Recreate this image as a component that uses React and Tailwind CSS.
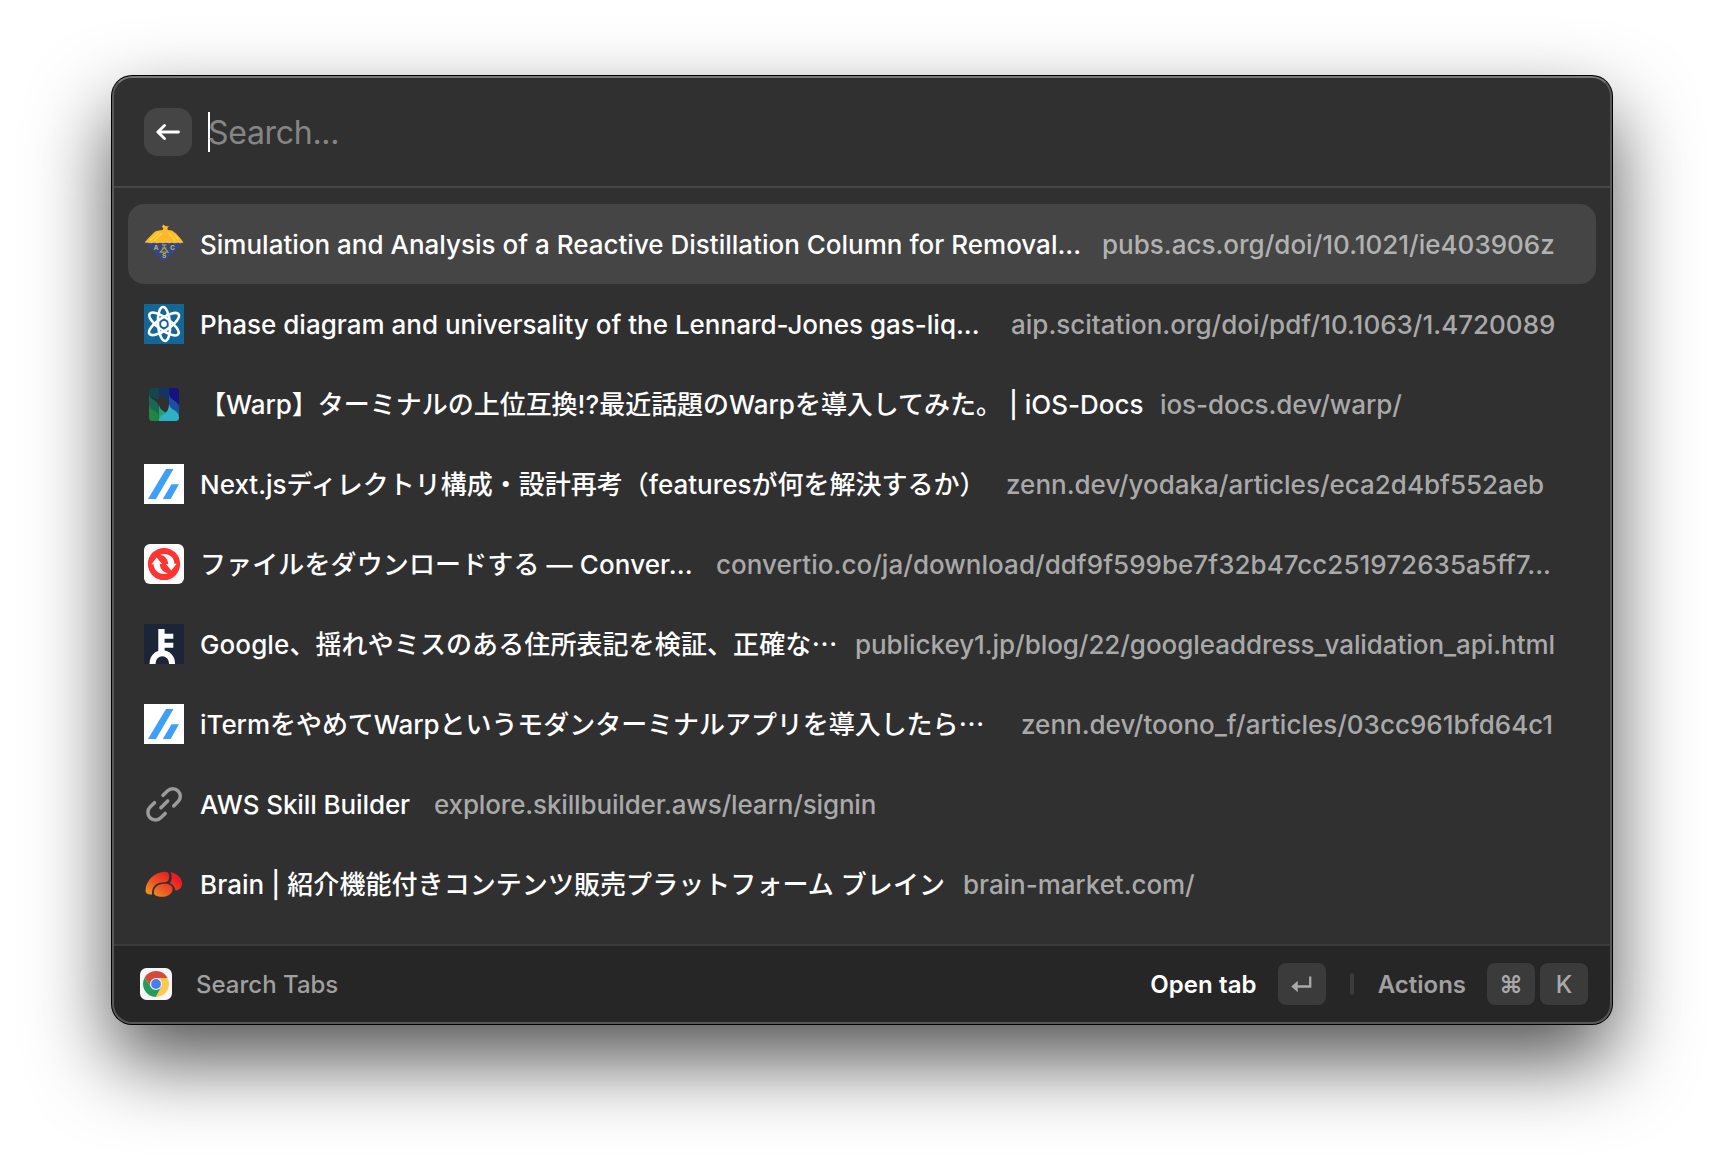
import React from "react";

function AcsIcon() {
  return (
    <svg className="size-10" viewBox="0 0 40 40">
      <path d="M0.5 18.500 L39.5 18.500 L20 38Z" fill="#30488f" />
      <path d="M0.500 18.500 L4 14.600 L8.500 10 L11 7.600 L14.500 6.400 L18.600 6 L19.300 4.600 L18 2.400 L19.400 0.400 L21.200 2 L25 2.600 L23.200 4.200 L24 6 L28 6.600 L32 9.600 L36.500 14.600 L39.500 18.500 L36 19.300 L34 18.800 L31 19.300 L28 18.800 L25 19.300 L22 18.800 L19 19.300 L16 18.800 L13 19.300 L10 18.800 L7 19.300 L4 18.800Z" fill="#fdb92b" />
      <path d="M6 16.500 L15 8.500 M10 17 L18 9 M30 10.500 L34.500 15.500 M25 9 L31 16.500" stroke="#ffd83d" strokeWidth="1.400" />
      <path d="M18 20.800 L22.5 20.800 M20.200 21 L20.200 24 M20.200 23.500 L16.400 28.200 L24 28.200Z M18.200 24.200 L22.400 24.200" fill="none" stroke="#b09c3a" strokeWidth="1.200" />
      <g fill="#c9a92f" fontFamily="Inter, sans-serif" fontWeight="800" fontSize="6.500" textAnchor="middle">
        <text x="12" y="26">A</text>
        <text x="28.400" y="26">C</text>
        <text x="20.200" y="34.200">S</text>
      </g>
    </svg>
  );
}

function AtomIcon() {
  return (
    <svg className="size-10 bg-[#136696]" viewBox="0 0 40 40" fill="none" stroke="#fff" strokeWidth="2.600">
      <ellipse cx="20" cy="20" rx="6" ry="17" transform="rotate(-4 20 20)" />
      <ellipse cx="20" cy="20" rx="6.200" ry="17.600" transform="rotate(56 20 20)" />
      <ellipse cx="20" cy="20" rx="6.200" ry="17.600" transform="rotate(-54 20 20)" />
      <circle cx="20" cy="20" r="2.900" fill="#fff" stroke="none" />
    </svg>
  );
}

function IosDocsIcon() {
  return (
    <svg className="size-10" viewBox="0 0 40 40">
      <path d="M5 7.500 Q5 4 8.500 4 H15 V16 L5 12Z" fill="#13454c" />
      <path d="M5 10 Q6 14 10 16 Q15 19 15 24 V33 L5 24Z" fill="#1b6755" />
      <path d="M5 21 Q6 24.500 10 26.500 Q15 29 15 34 V37 H8.500 Q5 37 5 33.500Z" fill="#238340" />
      <path d="M15 4 H25 V20 Q25 15.500 20 13.500 Q16 12 15 8Z" fill="#163366" />
      <path d="M15 21 Q16 25.500 20 27.500 Q25 30 25 35 V37 H15Z" fill="#23a075" />
      <path d="M25 4 H31.500 Q35 4 35 7.500 V21 L25 14Z" fill="#17127f" />
      <path d="M25 10 Q26 14.500 30 16.500 Q35 19 35 24 V31 L25 25Z" fill="#1c4f9f" />
      <path d="M25 20 Q26 24 30 26 Q35 28.500 35 33.500 Q35 37 31.500 37 H15 Q15 32 20 30 Q25 27 25 20Z" fill="#2cb2c3" />
    </svg>
  );
}

function ZennIcon() {
  return (
    <svg className="size-10 bg-white" viewBox="0 0 40 40" fill="#3e9ffb">
      <path d="M4 35 L22 5 H29.500 L12 35Z" />
      <path d="M18.800 35 L27.500 20.300 H35 L26.600 35Z" />
    </svg>
  );
}

function ConvertioIcon() {
  return (
    <svg className="size-10 rounded-[6px] bg-white" viewBox="0 0 40 40">
      <circle cx="20" cy="20" r="16.100" fill="#fd3431" />
      <g fill="#fff">
        <path d="M12.700 13.600 L18 20 H15.800 C16 24.500 19 28.500 24 29.200 C17 31.500 10 28 9.600 20.300 H7.400Z" />
        <path d="M12.700 13.600 L18 20 H15.800 C16 24.500 19 28.500 24 29.200 C17 31.500 10 28 9.600 20.300 H7.400Z" transform="rotate(180 20 20)" />
      </g>
    </svg>
  );
}

function KeyIcon() {
  return (
    <svg className="size-10 bg-[#1b2537]" viewBox="0 0 40 40">
      <path d="M14.300 5 H20.600 V9.700 H29.300 V14.700 H20.600 V18.800 H29.300 V23.800 H20.600 V28 H14.300Z" fill="#fff" />
      <circle cx="18.300" cy="39" r="9.700" fill="none" stroke="#fff" strokeWidth="6" />
    </svg>
  );
}

function LinkIcon() {
  return (
    <svg className="size-10" viewBox="0 0 40 40" fill="none" stroke="#9b9b9b" strokeWidth="3.500" strokeLinecap="round">
      <path d="M19 11.300 L23.400 6.900 A7.550 7.550 0 0 1 34.100 17.600 L29.700 22" />
      <path d="M10.500 18.700 L6.100 23.100 A7.550 7.550 0 0 0 16.800 33.800 L21.200 29.400" />
      <path d="M16.900 23.700 L23.700 16.900" />
    </svg>
  );
}

function BrainIcon() {
  return (
    <svg className="size-10" viewBox="0 0 40 40">
      <defs>
        <linearGradient id="brain" gradientUnits="userSpaceOnUse" x1="6" y1="33" x2="24" y2="9">
          <stop offset="0" stopColor="#f09a26" />
          <stop offset="0.450" stopColor="#ec5a24" />
          <stop offset="1" stopColor="#ec1c24" />
        </linearGradient>
      </defs>
      <g fill="url(#brain)">
        <path d="M1.500 26.500 C1.800 16 11 7.500 21.500 7.700 C24.500 7.900 25.400 10 25.200 13 C25 16.500 23.500 18.200 20.500 18.200 C12 18.200 7.500 22.500 8 30.500 C4 31 1.500 29.500 1.500 26.500Z" />
        <path d="M26.600 8 C33 9.500 38 14 38 19.500 C38 23.500 35 26.200 31.500 26.500 C31 23 29.300 20.700 26 19.200 C28 16.500 28.300 12 26.600 8Z" />
        <path d="M9.800 28.500 C9.800 23.500 14 19.800 20 19.800 C25.500 19.800 28.600 21.800 28.600 25 C28.600 29.500 24 32.800 18 32.800 C13.500 32.800 9.800 31.500 9.800 28.500Z" />
      </g>
    </svg>
  );
}

function ChromeIcon() {
  return (
    <svg className="size-8" viewBox="0 0 32 32">
      <rect width="32" height="32" rx="6.500" fill="#f6f6f6" />
      <path d="M16 10 H27.550 A13 13 0 0 0 4.740 9.500 L10.800 19Z" fill="#d6473c" />
      <path d="M21.200 19 L15.500 29 A13 13 0 0 0 27.550 10 H16Z" fill="#fdc94e" />
      <path d="M10.800 19 L4.740 9.500 A13 13 0 0 0 15.700 29 L21.200 19Z" fill="#249b58" />
      <circle cx="16" cy="16" r="6.100" fill="#f1f1f1" />
      <circle cx="16" cy="16" r="4.900" fill="#447ff0" />
    </svg>
  );
}

const tabs = [
  { icon: AcsIcon, width: "w-[902px]", title: "Simulation and Analysis of a Reactive Distillation Column for Removal...", url: "pubs.acs.org/doi/10.1021/ie403906z", selected: true },
  { icon: AtomIcon, width: "w-[811px]", title: "Phase diagram and universality of the Lennard-Jones gas-liq...", url: "aip.scitation.org/doi/pdf/10.1063/1.4720089" },
  { icon: IosDocsIcon, width: "w-[960px] tracking-[-0.02px]", title: "【Warp】ターミナルの上位互換!?最近話題のWarpを導入してみた。 | iOS-Docs", url: "ios-docs.dev/warp/", urlTracking: "tracking-[-0.08px]" },
  { icon: ZennIcon, width: "w-[806px]", title: "Next.jsディレクトリ構成・設計再考（featuresが何を解決するか）", url: "zenn.dev/yodaka/articles/eca2d4bf552aeb" },
  { icon: ConvertioIcon, width: "w-[516px] tracking-[0.12px]", title: "ファイルをダウンロードする — Conver...", url: "convertio.co/ja/download/ddf9f599be7f32b47cc251972635a5ff7...", urlTracking: "tracking-[0.03px]" },
  { icon: KeyIcon, width: "w-[655px] tracking-[0.1px]", title: "Google、揺れやミスのある住所表記を検証、正確な", more: true, url: "publickey1.jp/blog/22/googleaddress_validation_api.html", urlTracking: "tracking-[-0.06px]" },
  { icon: ZennIcon, width: "w-[821px] tracking-[-0.05px]", title: "iTermをやめてWarpというモダンターミナルアプリを導入したら", more: true, url: "zenn.dev/toono_f/articles/03cc961bfd64c1" },
  { icon: LinkIcon, width: "w-[234px] tracking-[-0.1px]", title: "AWS Skill Builder", url: "explore.skillbuilder.aws/learn/signin", urlTracking: "tracking-[-0.15px]" },
  { icon: BrainIcon, width: "w-[763px] tracking-[0.06px]", title: "Brain | 紹介機能付きコンテンツ販売プラットフォーム ブレイン", url: "brain-market.com/", urlTracking: "tracking-[-0.06px]" },
];

function TabRow({ icon: Icon, width, title, more, url, urlTracking, selected }) {
  return (
    <li className={`flex h-20 items-center rounded-2xl px-4 text-[26px] leading-10 font-medium whitespace-pre ${selected ? "bg-[#454545]" : ""}`}>
      <Icon />
      <span className={`ml-4 h-10 shrink-0 pt-px text-white ${width}`}>
        {title}
        {more && <span className="font-['Noto_Sans_CJK_JP',sans-serif] leading-none">⋯</span>}
      </span>
      <span className={`h-10 pt-px ${urlTracking || ""} ${selected ? "text-[#b2b2b2]" : "text-[#a9a9a9]"}`}>{url}</span>
    </li>
  );
}

function Key({ children }) {
  return <kbd className="flex h-[42px] w-12 items-center justify-center rounded-lg bg-[#3b3b3b] font-['Inter',sans-serif] text-2xl font-medium text-[#a9a9a9]">{children}</kbd>;
}

export default function App() {
  return (
    <div lang="ja" className="flex h-[1172px] w-[1724px] justify-center bg-white pt-[76px] font-['Inter','Noto_Sans_CJK_JP',sans-serif]">
      <main className="relative flex h-[948px] w-[1500px] flex-col overflow-hidden rounded-[20px] bg-[#303030] shadow-[0_0_0_1px_#000,0_36px_80px_rgba(0,0,0,0.68)]">
        <header className="flex h-28 shrink-0 items-center border-b-2 border-[#464646] pt-0.5 pl-8">
          <button className="flex size-12 items-center justify-center rounded-[14px] bg-[#454545]">
            <svg className="h-4 w-6" viewBox="0 0 24 16" fill="none" stroke="#fff" strokeWidth="2.800" strokeLinecap="round" strokeLinejoin="round">
              <path d="M22.500 8 H2 M8.500 1.500 L1.800 8 L8.500 14.500" />
            </svg>
          </button>
          <span className="ml-4 h-10 w-0.5 bg-white" />
          <span className="-ml-0.5 pt-0.5 text-[32px] leading-10 tracking-[-0.3px] text-[#858585]">Search...</span>
        </header>
        <ul className="flex-1 px-4 pt-4">
          {tabs.map((tab) => (
            <TabRow key={tab.url} {...tab} />
          ))}
        </ul>
        <footer className="flex h-20 shrink-0 items-center border-t-2 border-[#3b3b3b] bg-[#262626] pr-6 pb-0.5 pl-7 text-2xl">
          <ChromeIcon />
          <span className="ml-6 pt-0.5 font-medium text-[#a0a0a0]">Search Tabs</span>
          <span className="mr-[21px] ml-auto pt-0.5 font-semibold tracking-[0.1px] text-white">Open tab</span>
          <Key>
            <svg className="h-4 w-[21px]" viewBox="0 0 21 16">
              <path d="M19.200 0.500 V10.500 H6" fill="none" stroke="#a9a9a9" strokeWidth="2.300" />
              <path d="M0.200 10.500 L6.800 4.800 V16.200Z" fill="#a9a9a9" />
            </svg>
          </Key>
          <span className="mr-6 ml-6 h-[22px] w-1 rounded-full bg-[#3b3b3b]" />
          <span className="mr-[21px] pt-0.5 font-semibold text-[#a0a0a0]">Actions</span>
          <div className="flex gap-[5px]">
            <Key>
              <span className="pt-0.5 text-2xl font-semibold">⌘</span>
            </Key>
            <Key>
              <span className="pt-0.5">K</span>
            </Key>
          </div>
        </footer>
        <div className="pointer-events-none absolute inset-0 rounded-[20px] border-2 border-[#585858] border-t-[#787878]" />
      </main>
    </div>
  );
}
